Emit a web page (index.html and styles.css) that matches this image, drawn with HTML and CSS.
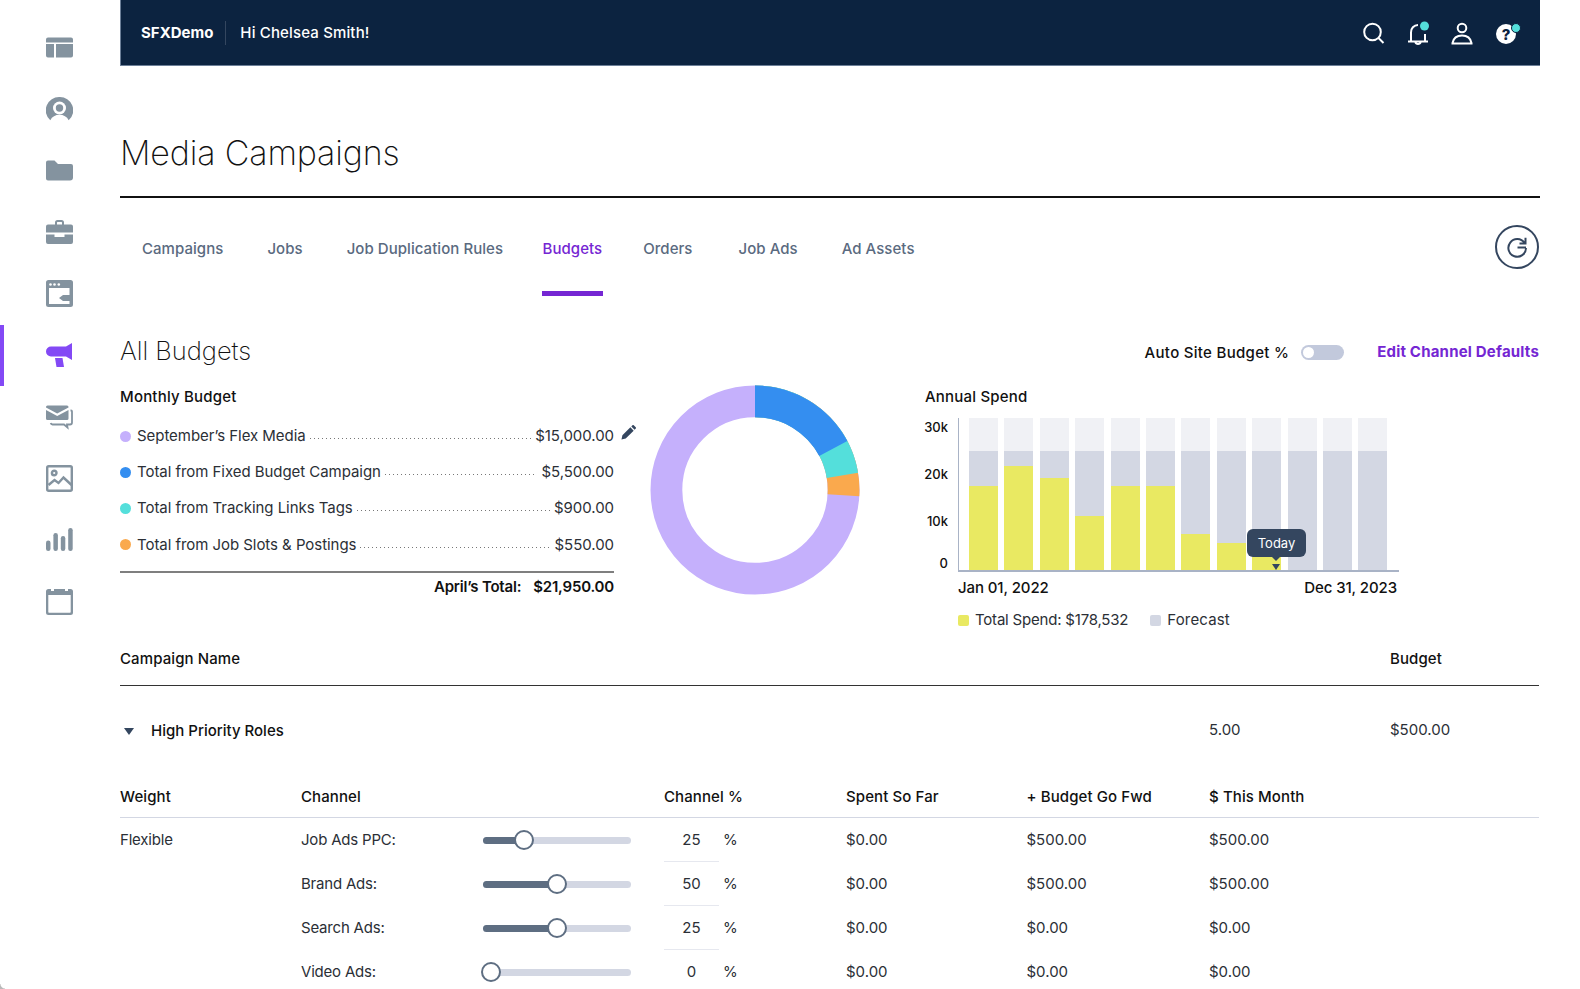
FILE: index.html
```html
<!DOCTYPE html>
<html lang="en">
<head>
<meta charset="utf-8">
<title>Media Campaigns</title>
<link rel="stylesheet" href="styles.css">
</head>
<body>
<nav class="sidebar">
  <a class="nav-item"><svg class="nav-icon" viewBox="0 0 27 27"><path d="M2 3.500h23a2 2 0 0 1 2 2v3H0v-3a2 2 0 0 1 2-2zM0 10h8v13.500H2a2 2 0 0 1-2-2zM10 10h17v11.500a2 2 0 0 1-2 2H10z"/></svg></a>
  <a class="nav-item"><svg class="nav-icon" viewBox="0 -0.500 27 27"><path d="M13.500.5A13.300 13.300 0 0 1 22.700 23.800C21 20 17.500 18.200 13.500 18.200S6 20 4.300 23.800A13.300 13.300 0 0 1 13.500.5z"/><circle cx="13.500" cy="11.500" r="6.500" fill="#fff"/><circle cx="13.500" cy="11.500" r="3.700"/></svg></a>
  <a class="nav-item"><svg class="nav-icon" viewBox="0 0 27 27"><path d="M2 3.500h6.500l3.500 3.400h13a2 2 0 0 1 2 2v11.600a3 3 0 0 1-3 3H2a2 2 0 0 1-2-2v-16a2 2 0 0 1 2-2z"/></svg></a>
  <a class="nav-item"><svg class="nav-icon" viewBox="0 0 27 27"><path fill-rule="evenodd" d="M9 5.500V3.500A2.500 2.500 0 0 1 11.500 1h4A2.500 2.500 0 0 1 18 3.500v2h7a2 2 0 0 1 2 2v6H0v-6a2 2 0 0 1 2-2zM11 5.500h5V3.500a.5.5 0 0 0-.5-.5h-4a.5.5 0 0 0-.5.500z"/><path d="M0 15.500h8.500v2.500h10v-2.500H27V23a2 2 0 0 1-2 2H2a2 2 0 0 1-2-2z"/></svg></a>
  <a class="nav-item"><svg class="nav-icon" viewBox="0 0 27 27"><path fill-rule="evenodd" d="M2.500 0h22A2.500 2.500 0 0 1 27 2.500v22a2.500 2.500 0 0 1-2.500 2.500h-22A2.500 2.500 0 0 1 0 24.500v-22A2.500 2.500 0 0 1 2.500 0zM3 8v16h20.500v-3h-6.500l-4-3 4-3h6.500V8z"/><circle cx="4.500" cy="4.500" r="1.300" fill="#fff"/><circle cx="8.500" cy="4.500" r="1.300" fill="#fff"/><circle cx="12.800" cy="4.500" r="1.300" fill="#fff"/></svg></a>
  <a class="nav-item active"><span class="nav-bar"></span><svg class="nav-icon" viewBox="0 0 27 27"><path d="M5 4.500h15L26 1v17l-6-3.500H5a5 5 0 0 1 0-10zM9 16h7.500l1.500 9H10.500z"/></svg></a>
  <a class="nav-item"><svg class="nav-icon" viewBox="0 -1.500 27 27"><path d="M0 2.500A1.500 1.500 0 0 1 1.500 1h19.500A1.500 1.500 0 0 1 22.500 2.500v.5L11.200 9 0 3zM0 5.500l11.200 6 11.300-6V14a1.500 1.500 0 0 1-1.500 1.500H1.500A1.500 1.500 0 0 1 0 14z"/><path class="nav-line" d="M24.500 6h.5a1 1 0 0 1 1 1v11a2 2 0 0 1-2 2h-3l.5 3-3.500-3H6.500a2 2 0 0 1-1.800-1.500"/></svg></a>
  <a class="nav-item"><svg class="nav-icon nav-stroke" viewBox="0 0 27 27"><rect x="1.200" y="1.200" width="24.600" height="24.600" rx="1.500"/><circle cx="8.200" cy="8" r="2.300"/><path d="M2.500 20l6-5 4 3 5-5.500 8 7.500"/></svg></a>
  <a class="nav-item"><svg class="nav-icon" viewBox="0 -1.500 27 27"><rect x="0" y="13" width="4.500" height="10.500" rx="2.200"/><rect x="7.400" y="5.500" width="4.500" height="18" rx="2.200"/><rect x="14.800" y="8.500" width="4.500" height="15" rx="2.200"/><rect x="22.200" y="0.500" width="4.500" height="23" rx="2.200"/></svg></a>
  <a class="nav-item"><svg class="nav-icon" viewBox="0 0 27 27"><path fill-rule="evenodd" d="M2.500 1H5v2h3V1h11v2h3V1h2.500A2.500 2.500 0 0 1 27 3.500v21a2.500 2.500 0 0 1-2.500 2.500h-22A2.500 2.500 0 0 1 0 24.500v-21A2.500 2.500 0 0 1 2.500 1zM2.300 7v17a.7.7 0 0 0 .7.700h21a.7.700 0 0 0 .7-.7V7z"/></svg></a>
</nav>

<main class="main">
  <header class="topbar">
    <strong class="brand">SFXDemo</strong>
    <span class="greeting">Hi Chelsea Smith!</span>
    <div class="top-icons">
      <svg class="top-icon" viewBox="0 0 24 24"><circle cx="10.500" cy="11" r="8.300"/><path d="M16.500 17l5 5"/></svg>
      <svg class="top-icon" viewBox="0 0 24 24"><path d="M2 20.500h20M5 20.500v-9a7 7 0 0 1 7-7.500M19 13v7.500M9.300 21a2.800 2.800 0 0 0 5.400 0"/><circle class="dot" cx="18.500" cy="5" r="4.500"/></svg>
      <svg class="top-icon" viewBox="0 0 24 24"><circle cx="12" cy="7" r="4.300"/><path d="M2.500 22.500h19v-.5c-1-5-5-7.500-9.500-7.500S3.500 17 2.500 22z"/></svg>
      <svg class="top-icon" viewBox="0 0 24 24"><circle class="help" cx="12" cy="13" r="10"/><text class="help-mark" x="12" y="18.500">?</text><circle class="dot ring" cx="22" cy="7" r="4.500"/></svg>
    </div>
  </header>

  <h1 class="page-title">Media Campaigns</h1>

  <div class="tabs">
    <a class="tab">Campaigns</a>
    <a class="tab">Jobs</a>
    <a class="tab">Job Duplication Rules</a>
    <a class="tab active">Budgets</a>
    <a class="tab tab-wide">Orders</a>
    <a class="tab">Job Ads</a>
    <a class="tab">Ad Assets</a>
    <button class="refresh" type="button"><svg viewBox="0 0 24 24"><path d="M19.500 8A8.800 8.800 0 1 0 21 13M20.500 2.800V8.500h-6M12.500 12.500H21"/></svg></button>
  </div>

  <div class="section-head">
    <h2 class="section-title">All Budgets</h2>
    <span class="auto-label">Auto Site Budget %</span>
    <span class="toggle"><span class="knob"></span></span>
    <a class="edit-link">Edit Channel Defaults</a>
  </div>

  <section class="charts">
    <div class="monthly">
      <h3 class="block-title">Monthly Budget</h3>
      <div class="line"><i class="swatch purple"></i><span>September’s Flex Media</span><i class="leader"></i><span>$15,000.00</span>
        <svg class="pencil" viewBox="0 0 16 16"><path d="M0.500 15.500l1-4.500L10 2.500l3.500 3.500-8.500 8.500zM11 1.500l1.200-1.200a1 1 0 0 1 1.400 0l2.100 2.100a1 1 0 0 1 0 1.400L14.500 5z"/></svg>
      </div>
      <div class="line"><i class="swatch blue"></i><span>Total from Fixed Budget Campaign</span><i class="leader"></i><span>$5,500.00</span></div>
      <div class="line"><i class="swatch teal"></i><span>Total from Tracking Links Tags</span><i class="leader"></i><span>$900.00</span></div>
      <div class="line"><i class="swatch orange"></i><span>Total from Job Slots &amp; Postings</span><i class="leader"></i><span>$550.00</span></div>
      <div class="total"><span>April’s Total:</span><span>$21,950.00</span></div>
    </div>

    <svg class="donut" viewBox="0 0 210 210">
      <circle class="ring-purple" cx="105" cy="105" r="88.600"/>
      <circle class="ring-orange" cx="105" cy="105" r="88.600" pathLength="360" stroke-dasharray="93.500 360" transform="rotate(-90 105 105)"/>
      <circle class="ring-teal" cx="105" cy="105" r="88.600" pathLength="360" stroke-dasharray="80.500 360" transform="rotate(-90 105 105)"/>
      <circle class="ring-blue" cx="105" cy="105" r="88.600" pathLength="360" stroke-dasharray="62 360" transform="rotate(-90 105 105)"/>
    </svg>

    <div class="annual">
      <h3 class="block-title">Annual Spend</h3>
      <div class="chart">
        <div class="y-axis"><span>30k</span><span>20k</span><span>10k</span><span>0</span></div>
        <div class="plot">
          <div class="bar"><i class="spend" style="height:84px"></i></div>
          <div class="bar"><i class="spend" style="height:104px"></i></div>
          <div class="bar"><i class="spend" style="height:92px"></i></div>
          <div class="bar"><i class="spend" style="height:54px"></i></div>
          <div class="bar"><i class="spend" style="height:84px"></i></div>
          <div class="bar"><i class="spend" style="height:84px"></i></div>
          <div class="bar"><i class="spend" style="height:36px"></i></div>
          <div class="bar"><i class="spend" style="height:27px"></i></div>
          <div class="bar"><i class="spend" style="height:15px"></i></div>
          <div class="bar"></div>
          <div class="bar"></div>
          <div class="bar"></div>
          <div class="today">Today</div>
          <i class="today-mark"></i>
        </div>
      </div>
      <div class="dates"><span>Jan 01, 2022</span><span>Dec 31, 2023</span></div>
      <div class="legend">
        <i class="legend-box spend-box"></i><span>Total Spend: $178,532</span>
        <i class="legend-box forecast-box"></i><span class="forecast-label">Forecast</span>
      </div>
    </div>
  </section>

  <section class="campaigns">
    <div class="camp-row camp-head"><span>Campaign Name</span><span></span><span>Budget</span></div>
    <div class="camp-row camp-item">
      <span class="camp-name"><i class="caret"></i><b>High Priority Roles</b></span>
      <span>5.00</span><span>$500.00</span>
    </div>
    <div class="channels">
      <div class="ch-row ch-head">
        <span>Weight</span><span>Channel</span><span></span><span>Channel %</span><span>Spent So Far</span><span>+ Budget Go Fwd</span><span>$ This Month</span>
      </div>
      <div class="ch-row">
        <span class="cell-label">Flexible</span><span class="cell-label">Job Ads PPC:</span>
        <span class="slider"><i class="fill" style="width:41px"></i><i class="thumb"></i></span>
        <span class="pct"><span class="pct-val">25</span><span>%</span></span>
        <span>$0.00</span><span>$500.00</span><span>$500.00</span>
      </div>
      <div class="ch-row">
        <span></span><span class="cell-label">Brand Ads:</span>
        <span class="slider"><i class="fill" style="width:74px"></i><i class="thumb"></i></span>
        <span class="pct"><span class="pct-val">50</span><span>%</span></span>
        <span>$0.00</span><span>$500.00</span><span>$500.00</span>
      </div>
      <div class="ch-row">
        <span></span><span class="cell-label">Search Ads:</span>
        <span class="slider"><i class="fill" style="width:74px"></i><i class="thumb"></i></span>
        <span class="pct"><span class="pct-val">25</span><span>%</span></span>
        <span>$0.00</span><span>$0.00</span><span>$0.00</span>
      </div>
      <div class="ch-row">
        <span></span><span class="cell-label">Video Ads:</span>
        <span class="slider"><i class="fill" style="width:8px"></i><i class="thumb"></i></span>
        <span class="pct"><span class="pct-val last">0</span><span>%</span></span>
        <span>$0.00</span><span>$0.00</span><span>$0.00</span>
      </div>
    </div>
  </section>
</main>
<i class="corner"></i>
</body>
</html>
```
FILE: styles.css
```css
* { box-sizing: border-box; }
html, body { height: 100%; overflow: hidden; }
body {
  margin: 0;
  display: flex;
  background: #fff;
  color: #2b2f36;
  font-family: "Inter", "Liberation Sans", sans-serif;
  font-size: 15px;
  line-height: 20px;
  letter-spacing: 0;
}
i { display: block; font-style: normal; }
h1, h2, h3 { margin: 0; }

/* sidebar */
.sidebar { flex: 0 0 120px; padding-top: 17px; }
.nav-item {
  position: relative;
  display: flex;
  height: 61.5px;
  padding-left: 46px;
  align-items: center;
}
.nav-icon { width: 27px; height: 27px; fill: #84939f; }
.nav-item.active .nav-icon { fill: #8349f5; }
.nav-line { fill: none; stroke: #84939f; stroke-width: 1.8; }
.nav-stroke { fill: none; stroke: #84939f; stroke-width: 2.4; }
.nav-bar { position: absolute; left: 0; top: 0; bottom: 0; width: 4px; background: #8349f5; }

/* main */
.main { flex: 0 0 1420px; }
.topbar {
  display: flex;
  align-items: center;
  height: 66px;
  padding-left: 20px;
  background: #0c2340;
  border-left: 1px solid #6c7f98;
  border-bottom: 1px solid #6c7f98;
  color: #fff;
}
.brand { font-weight: 700; padding-right: 12px; border-right: 1px solid #34465f; line-height: 24px; letter-spacing: 0; }
.greeting { padding-left: 14px; font-weight: 500; letter-spacing: 0.15px; }
.top-icons { display: flex; margin-left: auto; gap: 20px; padding-right: 22px; }
.top-icon { width: 24px; height: 24px; fill: none; stroke: #fff; stroke-width: 2; overflow: visible; }
.top-icon .dot { fill: #54dfdb; stroke: none; }
.top-icon .ring { stroke: #0c2340; stroke-width: 1; }
.top-icon .help { fill: #fff; stroke: none; }
.help-mark { fill: #0c2340; stroke: none; font: 800 15px "Inter", sans-serif; text-anchor: middle; }

.page-title {
  height: 132px;
  padding-top: 65px;
  border-bottom: 2px solid #111;
  font-size: 34px;
  font-weight: 250;
  line-height: 44px;
  letter-spacing: -0.15px;
  color: #111;
}

/* tabs */
.tabs { display: flex; align-items: flex-start; height: 98px; padding: 27px 1px 0 22px; }
.tab {
  margin-right: 44px;
  padding: 14px 0 32px;
  border-bottom: 5px solid transparent;
  color: #5a6a7f;
  font-weight: 500;
  letter-spacing: 0.05px;
}
.tab.active {
  margin: 0 40px 0 -5.5px;
  padding-left: 1px;
  padding-right: 1px;
  color: #7526d3;
  border-color: #7526d3;
}
.tab.tab-wide { margin-right: 46px; }
.refresh {
  width: 44px;
  height: 44px;
  margin-left: auto;
  padding: 0;
  display: flex;
  align-items: center;
  justify-content: center;
  background: #fff;
  border: 2px solid #34465f;
  border-radius: 50%;
}
.refresh svg { width: 24px; height: 24px; fill: none; stroke: #34465f; stroke-width: 2; }

.section-head { display: flex; align-items: center; height: 71px; padding: 39px 1px 0 0; margin-bottom: 1px; }
.section-title { flex: 1; font-size: 25.5px; font-weight: 250; line-height: 32px; color: #111; letter-spacing: 0; }
.auto-label { color: #111; font-weight: 500; letter-spacing: 0.3px; margin-top: 3px; }
.toggle {
  display: flex;
  align-items: center;
  width: 43px;
  height: 15px;
  margin: 2px 33px 0 12px;
  padding-left: 2px;
  background: #c2c9dc;
  border-radius: 8px;
}
.knob { width: 11px; height: 11px; background: #fff; border-radius: 50%; }
.edit-link { color: #7526d3; font-weight: 700; letter-spacing: 0.2px; margin-top: 2px; }

/* charts */
.charts { display: flex; height: 281px; }
.block-title { font-size: 15px; font-weight: 500; line-height: 20px; color: #111; margin-bottom: 12px; letter-spacing: 0.2px; }
.monthly { flex: 0 0 494px; padding-top: 19px; letter-spacing: -0.05px; }
.monthly .block-title { margin-bottom: 11px; }
.line { position: relative; display: flex; align-items: center; height: 36.2px; }
.swatch { width: 11px; height: 11px; margin-right: 6px; border-radius: 50%; }
.purple { background: #c5b0fc; }
.blue { background: #348ef0; }
.teal { background: #54dfdb; }
.orange { background: #faa94d; }
.leader {
  flex: 1;
  height: 1px;
  margin: 5px 4px 0;
  background-image: linear-gradient(to right, #777 1px, transparent 1px);
  background-size: 4px 1px;
}
.pencil { position: absolute; right: -22px; top: 7px; width: 15px; height: 15px; fill: #34465f; }
.total {
  display: flex;
  justify-content: flex-end;
  gap: 12px;
  margin-top: 8px;
  padding-top: 4px;
  border-top: 2px solid #7f7f7f;
  color: #111;
  font-weight: 600;
  letter-spacing: -0.2px;
}

.donut { flex: 0 0 210px; height: 210px; margin: 17px 0 0 36px; fill: none; stroke-width: 31.800; }
.ring-purple { stroke: #c5b0fc; }
.ring-orange { stroke: #faa94d; }
.ring-teal { stroke: #54dfdb; }
.ring-blue { stroke: #348ef0; }

.annual { flex: 0 0 474px; margin-left: 65px; padding-top: 19px; }
.chart { display: flex; margin-top: -1px; }
.y-axis {
  display: flex;
  flex-direction: column;
  align-items: flex-end;
  width: 23px;
  margin-right: 10px;
  padding-top: 2px;
  font-size: 13px;
  font-weight: 500;
  line-height: 14px;
  color: #111;
}
.y-axis span:nth-child(2) { margin-top: 33px; }
.y-axis span:nth-child(3) { margin-top: 33px; }
.y-axis span:nth-child(4) { margin-top: 28px; }
.plot {
  position: relative;
  display: flex;
  gap: 6.400px;
  width: 441px;
  height: 154px;
  padding-left: 10px;
  border-left: 1px solid #a9b3c6;
  border-bottom: 2px solid #a9b3c6;
}
.bar {
  display: flex;
  align-items: flex-end;
  flex: 0 0 29px;
  background: linear-gradient(#f0f1f5 33px, #d3d7e3 33px);
}
.spend { width: 100%; background: #e9e962; }
.today {
  position: absolute;
  left: 288px;
  top: 111px;
  width: 59px;
  height: 28px;
  background: #34465f;
  border-radius: 6px;
  color: #fff;
  font-size: 13px;
  line-height: 28px;
  text-align: center;
}
.today::after {
  content: "";
  position: absolute;
  left: 25px;
  top: 28px;
  border: 4px solid transparent;
  border-top-color: #34465f;
  border-bottom: 0;
}
.today-mark {
  position: absolute;
  left: 313px;
  bottom: 0;
  border: 4.500px solid transparent;
  border-top: 6px solid #34465f;
  border-bottom: 0;
}
.dates {
  display: flex;
  justify-content: space-between;
  width: 439px;
  margin: 6px 0 0 33px;
  color: #111;
  font-weight: 500;
  letter-spacing: -0.1px;
}
.legend { display: flex; align-items: center; margin: 12px 0 0 33px; letter-spacing: -0.2px; }
.legend-box { width: 11px; height: 11px; margin-right: 6px; border-radius: 2px; }
.spend-box { background: #e9e962; }
.forecast-box { background: #d3d7e3; margin-left: 22px; }
.forecast-label { letter-spacing: 0.15px; }

/* campaigns */
.campaigns { margin-right: 1px; }
.camp-row { display: grid; grid-template-columns: 1fr 181px 149px; }
.camp-head { padding-bottom: 16px; border-bottom: 1px solid #333; color: #111; font-weight: 500; height: 37px; letter-spacing: 0.1px; }
.camp-item { padding-top: 34px; }
.camp-name { display: flex; align-items: center; color: #111; position: relative; top: 1px; }
.camp-name b { font-weight: 500; letter-spacing: 0; }
.caret {
  margin: 0 17px 0 4px;
  border: 5px solid transparent;
  border-top: 7px solid #34465f;
  border-bottom: 0;
}
.channels { margin-top: 47px; }
.ch-row {
  display: grid;
  grid-template-columns: 181px 181px 182px 182px 180.500px 182.500px 1fr;
  align-items: center;
  height: 44px;
}
.cell-label { letter-spacing: -0.2px; }
.ch-head {
  height: 31px;
  padding-bottom: 10px;
  border-bottom: 1px solid #d3d7e3;
  color: #111;
  font-weight: 500;
  letter-spacing: 0.1px;
}
.slider {
  position: relative;
  display: block;
  width: 148px;
  height: 7px;
  margin-left: 1px;
  background: #d3d7e3;
  border-radius: 4px;
}
.fill { height: 100%; background: #5e6e82; border-radius: 4px 0 0 4px; }
.thumb {
  position: absolute;
  top: -6.500px;
  width: 20px;
  height: 20px;
  margin-left: -11px;
  background: #fff;
  border: 2px solid #5e6e82;
  border-radius: 50%;
}
.ch-row:nth-child(2) .thumb { left: 42px; }
.ch-row:nth-child(3) .thumb { left: 75px; }
.ch-row:nth-child(4) .thumb { left: 75px; }
.ch-row:nth-child(5) .thumb { left: 9px; }
.pct { display: flex; align-items: center; gap: 4px; height: 100%; }
.pct-val {
  width: 55px;
  height: 44px;
  line-height: 44px;
  text-align: center;
  border-bottom: 1px solid #e6e8ef;
}
.pct-val.last { border-bottom: 0; }

.corner {
  position: fixed;
  left: 0;
  bottom: 0;
  width: 5px;
  height: 5px;
  background: radial-gradient(circle at 100% 0, transparent 4px, #b9b9b9 5px);
}
```
